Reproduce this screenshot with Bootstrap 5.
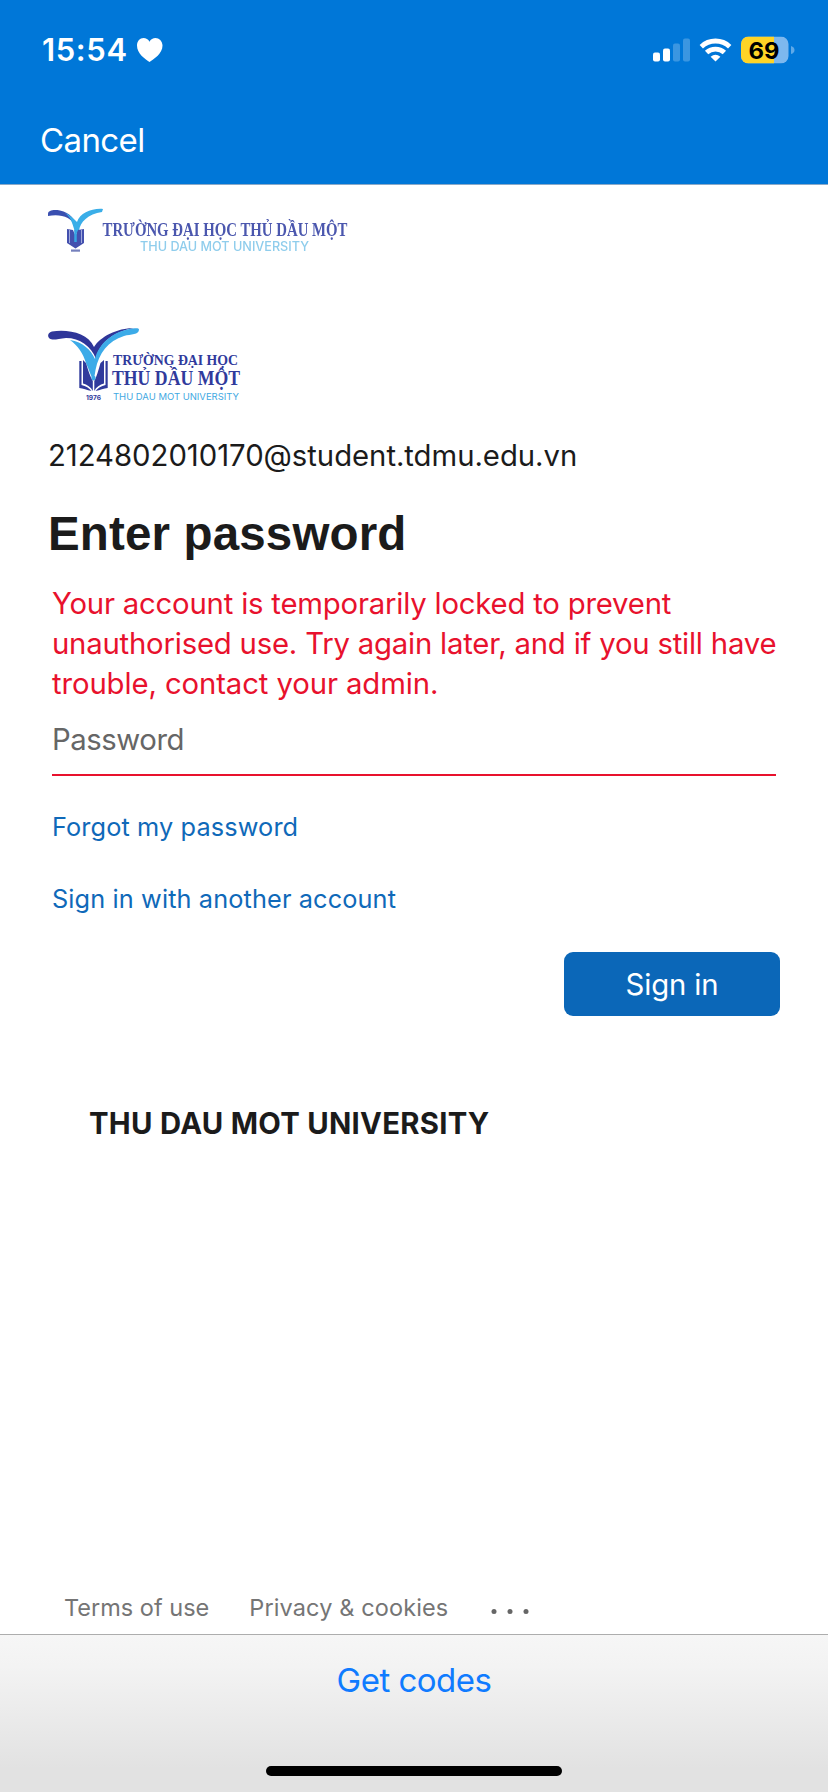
<!DOCTYPE html>
<html lang="en">
<head>
<meta charset="utf-8">
<meta name="viewport" content="width=device-width, initial-scale=1">
<title>Sign in</title>
<link href="https://cdn.jsdelivr.net/npm/bootstrap@5.3.0/dist/css/bootstrap.min.css" rel="stylesheet">
<style>
  body { font-family: Inter, "Liberation Sans", sans-serif; font-size: 29.3px; line-height: 40px; color: #1b1b1b; background: #fff; }
  a { text-decoration: none; }
  .screen { height: 1792px; overflow: hidden; }
  .top-area { height: 185px; background: #0077d8; border-bottom: 1px solid #8aa9c8; color: #fff; }
  .status-row { height: 100px; padding: 0 34px 0 42px; }
  .clock { font-size: 31px; font-weight: 600; letter-spacing: .6px; }
  .nav-row { height: 80px; padding-left: 40px; }
  .cancel { font-size: 33px; color: #fff; letter-spacing: -.6px; }
  .signin { padding: 23px 48px 0; }
  .logo-small { filter: blur(.5px); }
  .logo-main { margin-top: 73px; }
  .user-name { height: 40px; margin-top: 33px; letter-spacing: -.03px; }
  .heading { font: 700 47.5px/60px "Liberation Sans", Arial, sans-serif; letter-spacing: .15px; margin: 28px 0 0; }
  .indent { padding: 0 4px; }
  .error-text { color: #e8112d; margin-top: 20px; letter-spacing: -.2px; }
  .error-text .last-line { letter-spacing: -.1px; }
  .pass-input { height: 72px; border: 0; border-bottom: 2px solid #e8112d; border-radius: 0; padding: 1px 0 0; font-size: 29.3px; letter-spacing: -.45px; background: transparent; }
  .pass-input::placeholder { color: #666; opacity: 1; }
  .help { font-size: 25.3px; gap: 32px; padding-top: 31px; letter-spacing: .12px; }
  .help a { color: #0f69b9; height: 40px; white-space: nowrap; }
  .submit-row { margin-top: 33px; }
  .btn-signin { width: 216px; height: 64px; background: #0b67b8; border: 0; border-radius: 9px; color: #fff; font-size: 29.3px; letter-spacing: -.1px; padding: 1px 0 0; }
  .tenant { font-weight: 700; padding-left: 41px; margin-top: 88px; letter-spacing: .28px; }
  .foot { height: 54px; padding: 2px 0 0 64px; font-size: 23.5px; }
  .foot a { color: #757575; white-space: nowrap; }
  .foot .privacy { margin-left: 40px; letter-spacing: .12px; }
  .foot .more { margin: -2px 0 0 43px; }
  .bottom-bar { height: 158px; border-top: 1px solid #adadad; background: linear-gradient(#f6f6f6 0, #f3f3f3 20%, #e2e2e2 85%); }
  .codes { height: 90px; font-size: 33px; color: #0f7bff; letter-spacing: -.5px; }
  .home-pill { width: 296px; height: 10px; border-radius: 5px; background: #000; margin-top: 41px; }
  svg { display: block; overflow: visible; }
</style>
</head>
<body>
<div class="screen d-flex flex-column">
  <header class="top-area flex-shrink-0">
    <div class="status-row d-flex align-items-center justify-content-between">
      <div class="d-flex align-items-center">
        <span class="clock">15:54</span>
        <svg class="ms-2" width="28" height="26" viewBox="0 0 28 26"><path fill="#fff" d="M13.500 25C9 22 1 16.500 1 8.500C1 4 4 1 7.500 1C10 1 12.300 2.300 13.500 4.700C14.700 2.300 17 1 19.500 1C23 1 26.500 4 26.500 8.500C26.500 16.500 18 22 13.500 25Z"/></svg>
      </div>
      <svg width="142" height="30" viewBox="652 34.500 142 30">
        <g fill="#fff"><rect x="653" y="52" width="7" height="9" rx="2"/><rect x="663" y="48" width="7" height="13" rx="2"/></g>
        <g fill="#fff" opacity=".23"><rect x="673" y="43" width="7" height="18" rx="2"/><rect x="683" y="38" width="7" height="23" rx="2"/></g>
        <path fill="none" stroke="#fff" stroke-width="4.800" d="M701.300 46.200A20.500 20.500 0 0 1 729.700 46.200M706.600 52.100A13 13 0 0 1 724.400 52.100"/>
        <path fill="#fff" d="M715.500 61L710.600 56.200Q715.500 52.400 720.400 56.200Z"/>
        <clipPath id="bat"><rect x="741" y="36" width="47.500" height="27" rx="7.500"/></clipPath>
        <g clip-path="url(#bat)"><rect x="741" y="36" width="48" height="27" fill="#7db8ee"/><rect x="741" y="36" width="33" height="27" fill="#ffd426"/></g>
        <path fill="#5fa9e8" d="M791 45.500Q794.500 46.500 794.500 49.500T791 53.500Z"/>
        <text x="748.500" y="58" font-family="Inter, sans-serif" font-size="23.500" font-weight="700" fill="#000" textLength="31" lengthAdjust="spacingAndGlyphs">69</text>
      </svg>
    </div>
    <nav class="nav-row d-flex align-items-center"><a class="cancel" href="#">Cancel</a></nav>
  </header>

  <main class="signin flex-grow-1">
    <svg class="logo-small" width="302" height="46" viewBox="48 208 302 46" role="img" aria-label="Thu Dau Mot University">
      <path fill="#3a4fb0" d="M48 214C48 210 54 209.500 60 210.500C70 212.500 76 220 76.500 228C71 216 60 214 48 216Z"/>
      <path fill="#3aaee8" d="M103 209C92 208 80 213 77 222C72 217 70 215 65 213C72 218 73 226 75.500 234L79 231C80 222 88 214 102 212Z"/>
      <path fill="#4350ae" d="M67 229L73 230L75.500 236L78 230L84 229V243L75.500 248.500L67 243Z"/><path stroke="#b9c0e6" stroke-width=".8" d="M69.500 230V243M81.500 230V243"/><path stroke="#36a5e3" stroke-width="2.500" d="M75.500 230V242"/>
      <rect x="71" y="249.500" width="9" height="2.200" fill="#7580bd"/>
      <text x="102.500" y="235.500" font-family="Liberation Serif, Noto Sans, serif" font-weight="700" font-size="18" fill="#4b57ae" textLength="245" lengthAdjust="spacingAndGlyphs">TRƯỜNG ĐẠI HỌC THỦ DẦU MỘT</text>
      <text x="140" y="250.500" font-family="Inter, sans-serif" font-size="12.500" font-weight="500" fill="#8fcdec" textLength="169" lengthAdjust="spacingAndGlyphs">THU DAU MOT UNIVERSITY</text>
    </svg>
    <svg class="logo-main" width="196" height="76" viewBox="48 327 196 76" role="img" aria-label="Trường Đại học Thủ Dầu Một">
      <path fill="#2f3699" d="M52 331.500C68 329 88 333 94 347C100 337 117 328 134 328C113 332 99 343 96 359C91 346 80 338 66 338C58 338.500 53 341 49.500 338.500C47 336 48 332.500 52 331.500Z"/>
      <path fill="#3cabe8" d="M139 329.500C139 335 131 334 124 336C108 341 99 353 95.500 370C95 374 94 378 93.500 381C91 376 89 370 86 363C83 353 78 346 70 340C83 342 91 350 95 359C98 345 112 331 133 328.500C136 328 139 328 139 329.500Z"/>
      <g fill="#303a9c"><path d="M79.300 361H81.500V385C86 386 89 388 91.500 391C87 390 83 388.500 79.300 388Z"/><path d="M83 360L86 363C88 370 90.500 377 92.800 381V391C91 387 87 384.500 83 383.500Z"/><path d="M104 360L100.500 363C98.500 370 96.500 377 94.300 381V391C96 387 100 384.500 104 383.500Z"/><path d="M107.700 361H105.500V385C101 386 98 388 95.500 391C100 390 104 388.500 107.700 388Z"/></g>
      <circle cx="93.500" cy="378" r="2.200" fill="#3cabe8"/>
      <text x="86" y="400" font-family="Inter, sans-serif" font-weight="700" font-size="6.500" fill="#303a9c" textLength="15" lengthAdjust="spacingAndGlyphs">1976</text>
      <text x="113" y="365" font-family="Liberation Serif, serif" font-weight="700" font-size="14.500" fill="#303a9c" textLength="125" lengthAdjust="spacingAndGlyphs">TRƯỜNG ĐẠI HỌC</text>
      <text x="112" y="384.500" font-family="Liberation Serif, serif" font-weight="700" font-size="20.500" fill="#303a9c" textLength="128" lengthAdjust="spacingAndGlyphs">THỦ DẦU MỘT</text>
      <text x="113" y="399.500" font-family="Inter, sans-serif" font-size="9.300" fill="#3fa9e2" textLength="126" lengthAdjust="spacingAndGlyphs">THU DAU MOT UNIVERSITY</text>
    </svg>
    <div class="user-name">2124802010170@student.tdmu.edu.vn</div>
    <h1 class="heading">Enter password</h1>
    <form class="indent">
      <div class="error-text text-nowrap">Your account is temporarily locked to prevent<br>unauthorised use. Try again later, and if you still have<br><span class="last-line">trouble, contact your admin.</span></div>
      <input class="form-control pass-input" type="password" placeholder="Password" aria-label="Password">
      <div class="help d-flex flex-column"><a href="#">Forgot my password</a><a href="#">Sign in with another account</a></div>
    </form>
    <div class="submit-row d-flex justify-content-end"><button class="btn btn-signin" type="button">Sign in</button></div>
    <div class="tenant">THU DAU MOT UNIVERSITY</div>
  </main>

  <div class="foot d-flex align-items-center flex-shrink-0">
    <a href="#">Terms of use</a>
    <a class="privacy" href="#">Privacy &amp; cookies</a>
    <a class="more" href="#" aria-label="More"><svg width="38" height="16" viewBox="0 0 38 16" fill="#666"><circle cx="3" cy="12.500" r="2.500"/><circle cx="19" cy="12.500" r="2.500"/><circle cx="35" cy="12.500" r="2.500"/></svg></a>
  </div>
  <footer class="bottom-bar d-flex flex-column align-items-center flex-shrink-0">
    <a class="codes d-flex align-items-center" href="#">Get codes</a>
    <div class="home-pill"></div>
  </footer>
</div>
<script src="https://cdn.jsdelivr.net/npm/bootstrap@5.3.0/dist/js/bootstrap.bundle.min.js"></script>
</body>
</html>
